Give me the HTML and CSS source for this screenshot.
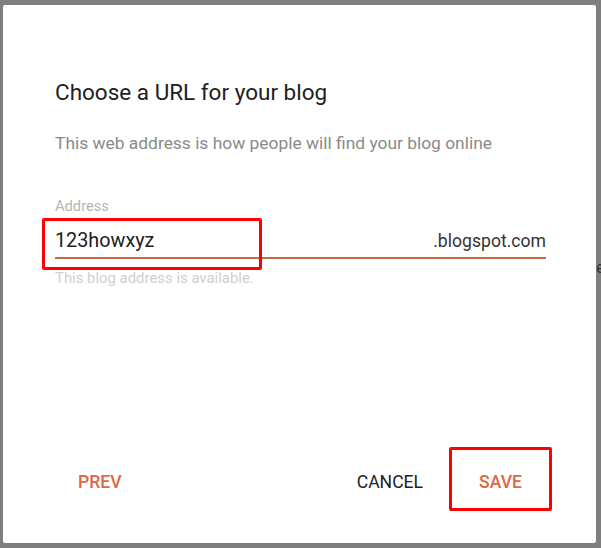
FILE: index.html
```html
<!DOCTYPE html>
<html>
<head>
<meta charset="utf-8">
<link rel="stylesheet" href="styles.css">
</head>
<body>
<div class="stage">
  <div class="dialog">
    <h1 class="title">Choose a URL for your blog</h1>
    <p class="subtitle">This web address is how people will find your blog online</p>
    <div class="field">
      <div class="label">Address</div>
      <div class="input-row">
        <span class="value">123howxyz</span>
        <span class="suffix">.blogspot.com</span>
      </div>
      <div class="helper">This blog address is available.</div>
      <div class="mark mark-input"></div>
    </div>
    <div class="actions">
      <button class="btn accent prev">PREV</button>
      <div class="right">
        <button class="btn cancel">CANCEL</button>
        <button class="btn accent save">SAVE<span class="mark mark-save"></span></button>
      </div>
    </div>
  </div>
  <span class="edge">e</span>
</div>
</body>
</html>
```

FILE: styles.css
```css
html, body {
  margin: 0;
  padding: 0;
  background: #7f7f7f;
  font-family: Roboto, "Noto Sans", sans-serif;
}
.stage {
  position: relative;
  width: 601px;
  height: 548px;
  padding: 5px 5px 5px 3px;
  box-sizing: border-box;
  overflow: hidden;
}
.dialog {
  background: #fff;
  width: 593px;
  height: 538px;
  box-sizing: border-box;
  padding: 74px 50px 0 52px;
  display: flex;
  flex-direction: column;
  border-radius: 2px;
}
.title {
  margin: 0;
  font-size: 22.5px;
  font-weight: 400;
  line-height: 26px;
  color: #212121;
}
.subtitle {
  margin: 27px 0 0;
  font-size: 17.4px;
  line-height: 22px;
  color: #8a8a8a;
}
.field {
  position: relative;
  margin-top: 43px;
}
.label {
  font-size: 14.7px;
  line-height: 18px;
  color: #b5b5b5;
}
.input-row {
  display: flex;
  justify-content: space-between;
  align-items: baseline;
  border-bottom: 2px solid #c8694a;
  padding: 14px 0 4px;
}
.value {
  font-size: 19.8px;
  line-height: 24px;
  color: #212121;
}
.suffix {
  font-size: 17.6px;
  color: #333;
}
.helper {
  margin-top: 10px;
  font-size: 14.9px;
  line-height: 18px;
  color: #cfcfcf;
}
.mark {
  position: absolute;
  border: 3px solid #ff0000;
  border-radius: 2px;
  box-sizing: border-box;
  pointer-events: none;
}
.mark-input {
  left: -13px;
  top: 21px;
  width: 220px;
  height: 52px;
}
.actions {
  margin-top: auto;
  margin-bottom: 43px;
  display: flex;
  justify-content: space-between;
  align-items: center;
}
.right {
  display: flex;
  align-items: center;
}
.btn {
  font-family: Roboto, "Noto Sans", sans-serif;
  background: none;
  border: 0;
  font-size: 17.6px;
  font-weight: 500;
  padding: 0 22px;
  height: 36px;
  line-height: 36px;
  position: relative;
}
.accent {
  color: #e0673f;
}
.prev {
  margin-left: 1px;
}
.cancel {
  color: #222;
  font-weight: 400;
}
.save {
  margin-left: 12px;
  margin-right: 2px;
}
.mark-save {
  left: -8px;
  top: -17px;
  width: 103px;
  height: 64px;
}
.edge {
  position: absolute;
  left: 596px;
  top: 258px;
  font-size: 16px;
  line-height: 20px;
  color: #333;
}
```
